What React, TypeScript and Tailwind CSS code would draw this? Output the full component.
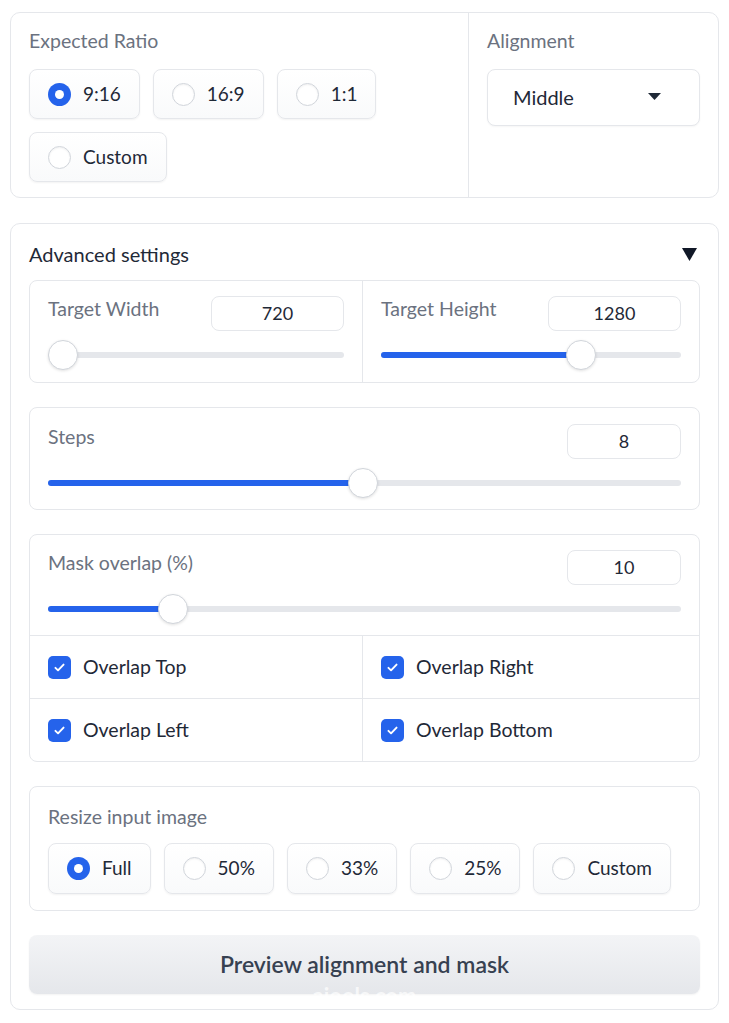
import React from "react";

const font = { fontFamily: "Lato, 'Noto Sans', sans-serif" };

function Radio({ label, checked = false, h = "h-[50px]" }: { label: string; checked?: boolean; h?: string }) {
  return (
    <div className={`flex ${h} items-center gap-3 rounded-lg border border-[#e5e7eb] bg-gradient-to-b from-white to-[#f9fafb] pl-[18px] pr-[18px] shadow-[0_1px_2px_rgba(0,0,0,0.05)]`}>
      {checked ? (
        <span className="flex h-[23px] w-[23px] items-center justify-center rounded-full bg-[#2563eb]">
          <span className="h-[9px] w-[9px] rounded-full bg-white" />
        </span>
      ) : (
        <span className="h-[23px] w-[23px] rounded-full border border-[#d1d5db] bg-white shadow-[inset_0_1px_2px_rgba(0,0,0,0.06)]" />
      )}
      <span className="text-[19px] text-[#1f2937]">{label}</span>
    </div>
  );
}

function Slider({ p }: { p: number }) {
  const pos = `calc(15px + (100% - 30px) * ${p})`;
  return (
    <div className="relative mt-[10px] h-[30px]">
      <div className="absolute left-0 right-0 top-[12px] h-[6px] rounded-full bg-[#e5e7eb]" />
      <div className="absolute left-0 top-[12px] h-[6px] rounded-full bg-[#2563eb]" style={{ width: p === 0 ? 0 : pos }} />
      <div
        className="absolute top-0 h-[30px] w-[30px] -translate-x-1/2 rounded-full border border-[#d1d5db] bg-white shadow-[0_1px_3px_rgba(0,0,0,0.12)]"
        style={{ left: pos }}
      />
    </div>
  );
}

function NumField({ label, value, inputW }: { label: string; value: string; inputW: string }) {
  return (
    <div className="flex h-[34px] items-start justify-between">
      <span className="text-[19.5px] leading-[26px] text-[#6b7280]">{label}</span>
      <div
        className={`flex h-[35px] ${inputW} items-center justify-center rounded-lg border border-[#e5e7eb] bg-white text-[18px] text-[#1f2937]`}
      >
        {value}
      </div>
    </div>
  );
}

function Check({ label }: { label: string }) {
  return (
    <div className="flex h-[62px] items-center gap-3 px-[18px]">
      <span className="flex h-[23px] w-[23px] items-center justify-center rounded-[5px] bg-[#2563eb]">
        <svg width="13" height="13" viewBox="0 0 16 16" fill="none">
          <path d="M3 8.5l3.2 3L13 4.5" stroke="white" strokeWidth="2.4" strokeLinecap="round" strokeLinejoin="round" />
        </svg>
      </span>
      <span className="text-[19.5px] text-[#1f2937]">{label}</span>
    </div>
  );
}

export default function App() {
  return (
    <div className="min-h-[1023px] w-[729px] bg-white px-[10px] pt-[12px]" style={font}>
      {/* ratio + alignment */}
      <div className="flex rounded-[10px] border border-[#e5e7eb] bg-white">
        <div className="w-[458px] border-r border-[#e5e7eb] px-[18px] pb-[15px] pt-[15px]">
          <div className="h-[26px] text-[19.5px] leading-[26px] text-[#6b7280]">Expected Ratio</div>
          <div className="mt-[15px] flex flex-wrap gap-[13px]">
            <Radio label="9:16" checked />
            <Radio label="16:9" />
            <Radio label="1:1" />
            <Radio label="Custom" />
          </div>
        </div>
        <div className="flex-1 px-[18px] pt-[15px]">
          <div className="h-[26px] text-[19.5px] leading-[26px] text-[#6b7280]">Alignment</div>
          <div className="mt-[15px] flex h-[57px] items-center justify-between rounded-lg border border-[#e5e7eb] bg-white pb-[2px] pl-[25px] pr-[38px] shadow-[0_1px_2px_rgba(0,0,0,0.04)]">
            <span className="text-[20px] text-[#1f2937]">Middle</span>
            <svg width="13" height="7" viewBox="0 0 13 7">
              <path d="M0 0h13L6.5 7z" fill="#1f2937" />
            </svg>
          </div>
        </div>
      </div>

      {/* advanced */}
      <div className="mt-[25px] rounded-[10px] border border-[#e5e7eb] bg-white px-[18px] pb-[15px] pt-[17px]">
        <div className="mb-[13px] flex h-[26px] items-center justify-between">
          <span className="text-[20px] text-[#1f2937]">Advanced settings</span>
          <svg width="15" height="13" viewBox="0 0 15 13" className="mr-[3px]">
            <path d="M0 0h15L7.5 13z" fill="#111827" />
          </svg>
        </div>

        <div className="flex flex-col gap-[24px]">
          <div className="flex rounded-lg border border-[#e5e7eb]">
            <div className="w-[333px] border-r border-[#e5e7eb] px-[18px] pb-[12px] pt-[15px]">
              <NumField label="Target Width" value="720" inputW="w-[133px]" />
              <Slider p={0} />
            </div>
            <div className="flex-1 px-[18px] pb-[12px] pt-[15px]">
              <NumField label="Target Height" value="1280" inputW="w-[133px]" />
              <Slider p={0.687} />
            </div>
          </div>

          <div className="rounded-lg border border-[#e5e7eb] px-[18px] pb-[11px] pt-[16px]">
            <NumField label="Steps" value="8" inputW="w-[114px]" />
            <Slider p={0.498} />
          </div>

          <div className="rounded-lg border border-[#e5e7eb]">
            <div className="px-[18px] pb-[11px] pt-[15px]">
              <NumField label="Mask overlap (%)" value="10" inputW="w-[114px]" />
              <Slider p={0.183} />
            </div>
            <div className="grid grid-cols-[333px_1fr] border-t border-[#e5e7eb]">
              <div className="border-b border-r border-[#e5e7eb]">
                <Check label="Overlap Top" />
              </div>
              <div className="border-b border-[#e5e7eb]">
                <Check label="Overlap Right" />
              </div>
              <div className="border-r border-[#e5e7eb]">
                <Check label="Overlap Left" />
              </div>
              <div>
                <Check label="Overlap Bottom" />
              </div>
            </div>
          </div>

          <div className="rounded-lg border border-[#e5e7eb] px-[18px] pb-[16px] pt-[17px]">
            <div className="h-[26px] text-[19.5px] leading-[26px] text-[#6b7280]">Resize input image</div>
            <div className="mt-[13px] flex gap-[13px]">
              <Radio label="Full" checked h="h-[51px]" />
              <Radio label="50%" h="h-[51px]" />
              <Radio label="33%" h="h-[51px]" />
              <Radio label="25%" h="h-[51px]" />
              <Radio label="Custom" h="h-[51px]" />
            </div>
          </div>

          <button className="relative flex h-[59px] items-center justify-center rounded-lg bg-gradient-to-b from-[#f3f4f6] to-[#e5e7eb] text-[23px] font-semibold text-[#374151] shadow-[0_1px_2px_rgba(0,0,0,0.05)]">
            Preview alignment and mask
            <span className="absolute bottom-[-16px] left-1/2 -translate-x-1/2 text-[22px] font-bold leading-[28px] text-white/70">
              aiools.com
            </span>
          </button>
        </div>
      </div>
    </div>
  );
}
